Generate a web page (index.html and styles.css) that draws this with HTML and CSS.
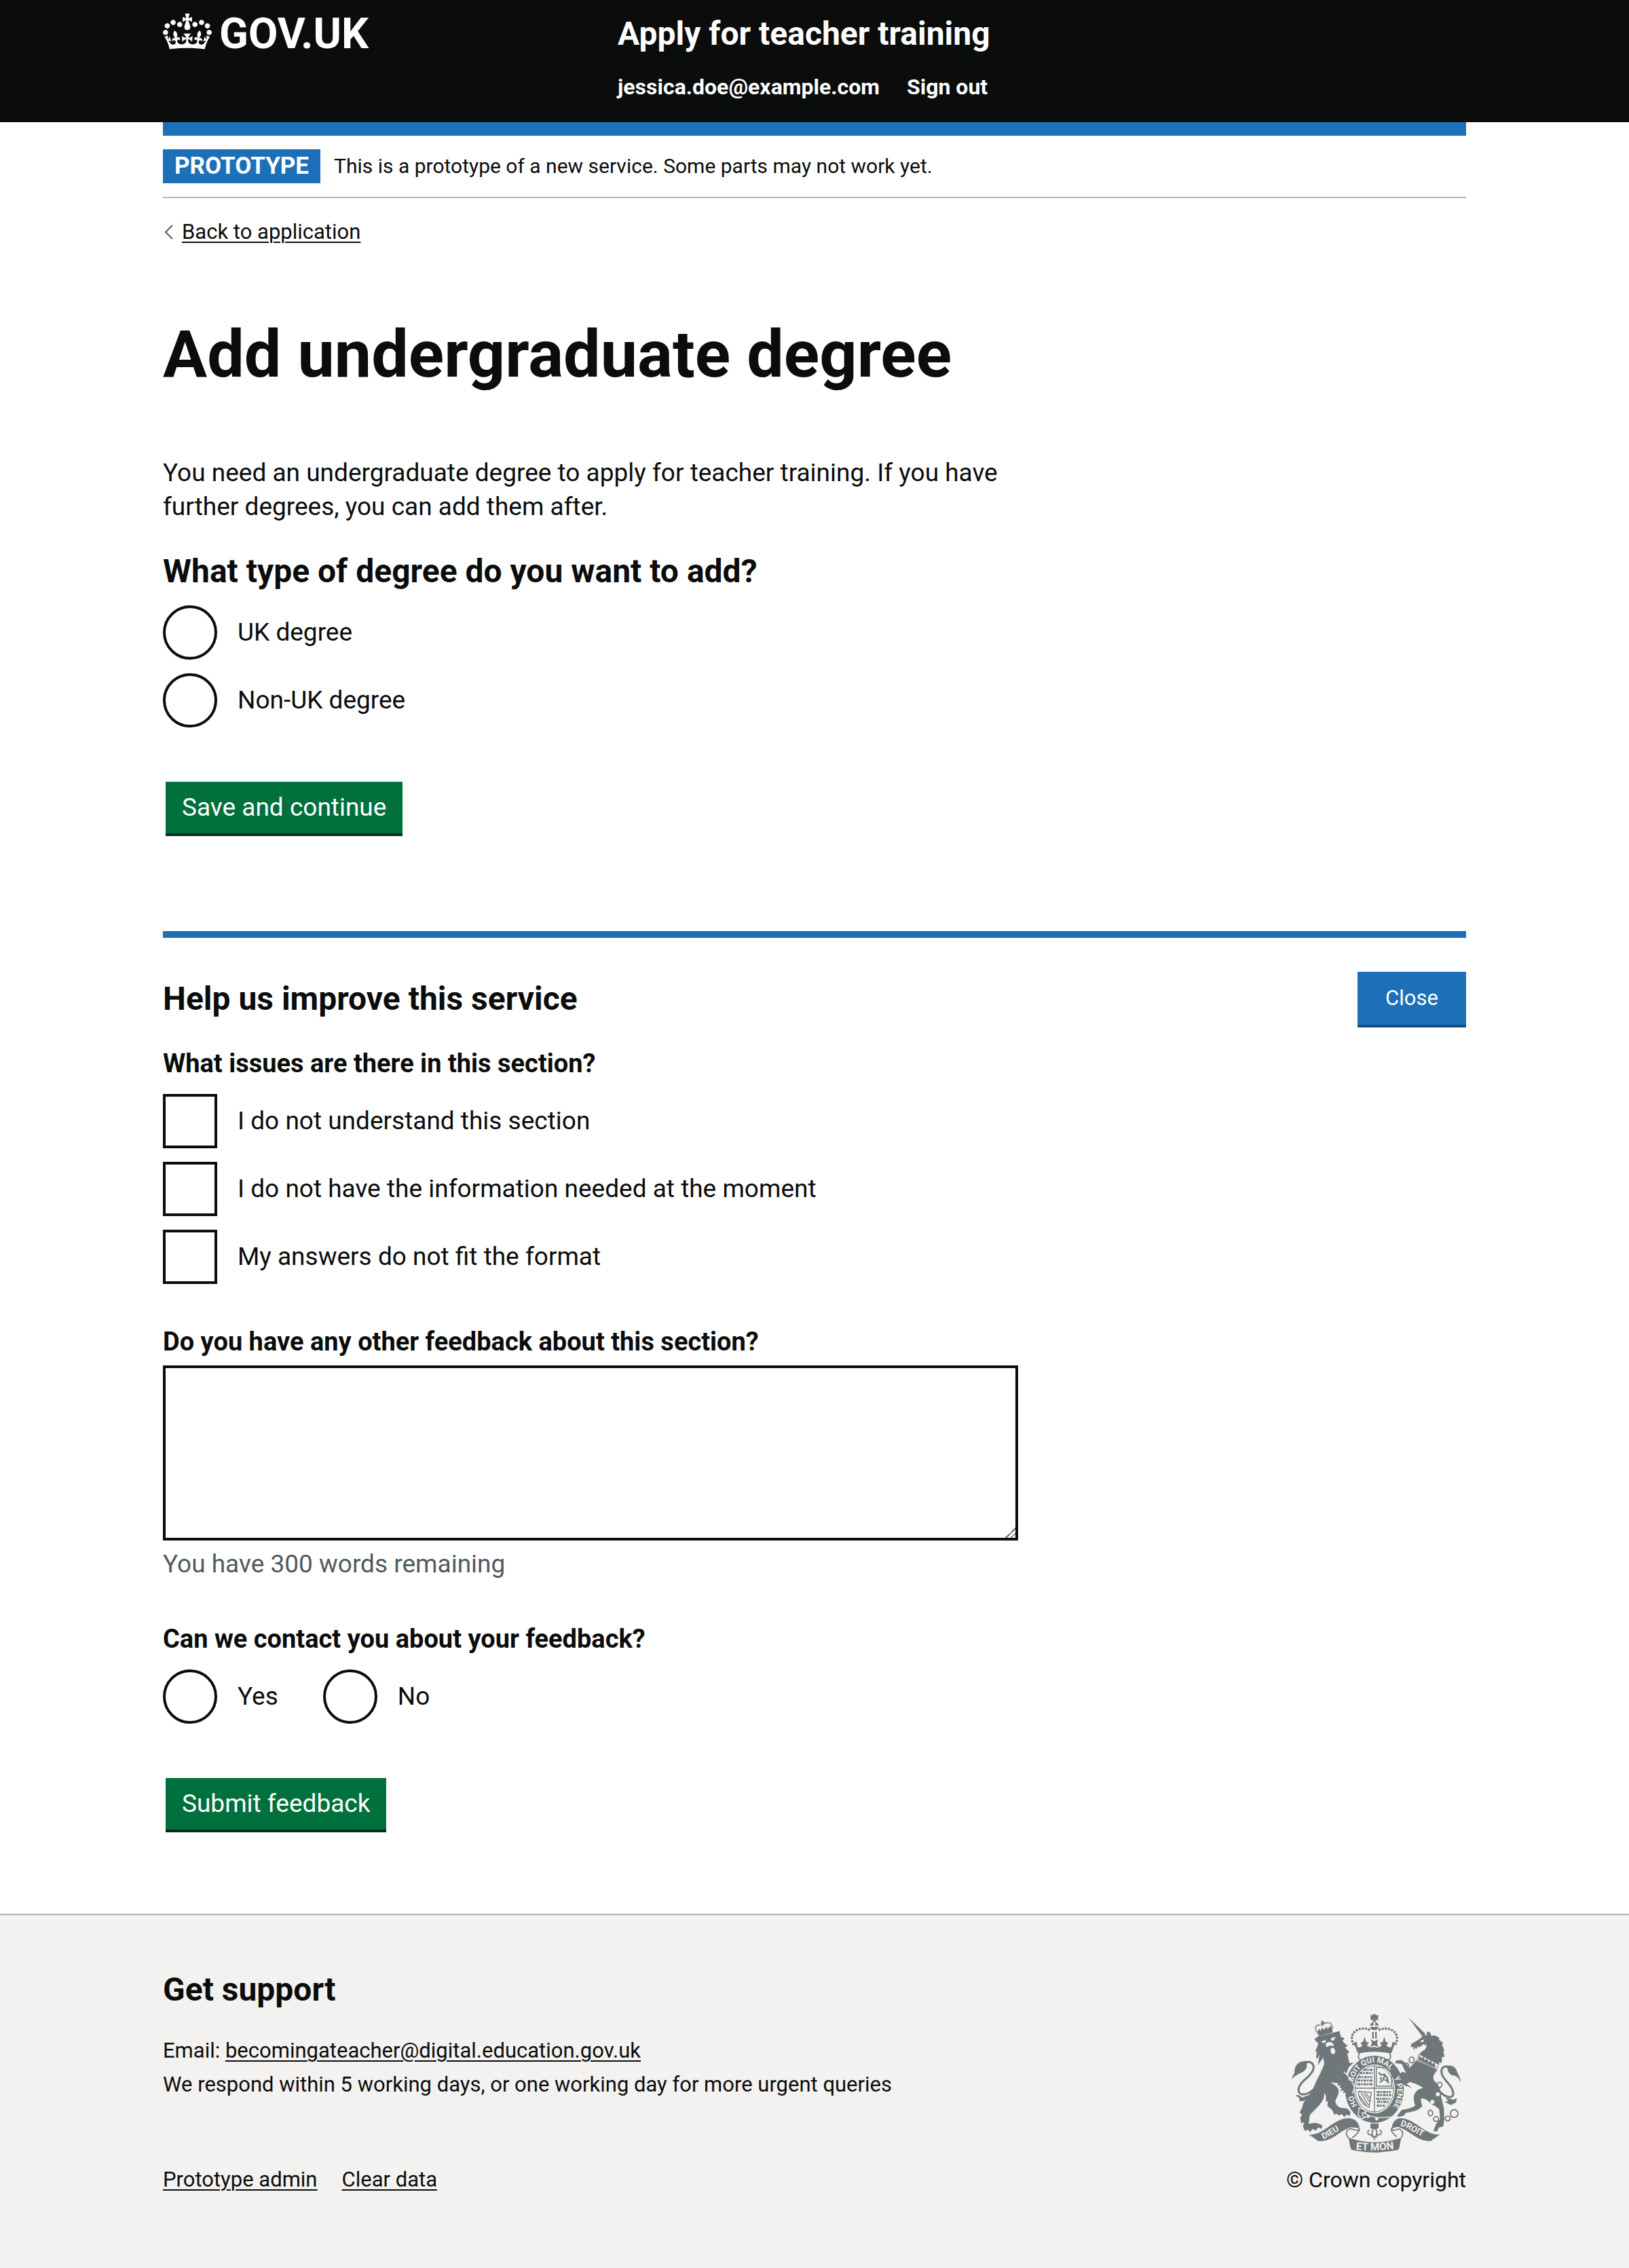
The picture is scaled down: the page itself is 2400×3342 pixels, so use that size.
FILE: index.html
```html
<!DOCTYPE html>
<html lang="en">
<head>
  <meta charset="utf-8">
  <meta name="viewport" content="width=device-width, initial-scale=1">
  <title>Add undergraduate degree – Apply for teacher training</title>
  <link rel="stylesheet" href="styles.css">
</head>
<body>
  <header class="header">
    <div class="container header-row">
      <a class="logo" href="#">
        <svg class="logo-crown" viewBox="0 0 132 97" aria-hidden="true">
          <path fill="currentColor" d="M25 30.2c3.5 1.5 7.7-.2 9.1-3.7 1.5-3.6-.2-7.8-3.9-9.2-3.6-1.4-7.6.3-9.1 3.9-1.4 3.5.3 7.5 3.9 9zM9 39.5c3.6 1.5 7.8-.2 9.2-3.7 1.5-3.6-.2-7.8-3.9-9.1-3.6-1.5-7.6.2-9.1 3.8-1.4 3.5.3 7.5 3.8 9zM4.4 57.2c3.5 1.5 7.7-.2 9.1-3.8 1.5-3.6-.2-7.7-3.9-9.1-3.5-1.5-7.6.3-9.1 3.8-1.4 3.5.3 7.6 3.9 9.1zm38.3-21.4c3.5 1.5 7.7-.2 9.1-3.8 1.5-3.6-.2-7.7-3.9-9.1-3.6-1.5-7.6.3-9.1 3.8-1.3 3.6.4 7.7 3.9 9.1zm64.4-5.6c-3.6 1.5-7.8-.2-9.1-3.7-1.5-3.6.2-7.8 3.8-9.2 3.6-1.4 7.7.3 9.2 3.9 1.3 3.5-.4 7.5-3.9 9zm15.9 9.3c-3.6 1.5-7.7-.2-9.1-3.7-1.5-3.6.2-7.8 3.7-9.1 3.6-1.5 7.7.2 9.2 3.8 1.5 3.5-.3 7.5-3.8 9zm4.7 17.7c-3.6 1.5-7.8-.2-9.2-3.8-1.5-3.6.2-7.7 3.9-9.1 3.6-1.5 7.7.3 9.2 3.8 1.3 3.5-.4 7.6-3.9 9.1zM89.3 35.8c-3.6 1.5-7.8-.2-9.2-3.8-1.4-3.6.2-7.7 3.9-9.1 3.6-1.5 7.7.3 9.2 3.8 1.4 3.6-.3 7.7-3.9 9.1zM69.7 17.7l8.9 4.7V9.3l-8.9 2.8c-.2-.3-.5-.6-.9-.9L72.4 0H59.6l3.5 11.2c-.3.3-.6.5-.9.9l-8.8-2.8v13.1l8.8-4.7c.3.3.6.7.9.9l-5 15.4v.1c-.2.8-.4 1.6-.4 2.4 0 4.1 3.1 7.5 7 8.1h.2c.3 0 .7.1 1 .1.4 0 .7 0 1-.1h.2c4-.6 7.1-4.1 7.1-8.1 0-.8-.1-1.7-.4-2.4V34l-5.1-15.4c.4-.2.7-.6 1-.9zM66 92.8c16.9 0 32.8 1.1 47.1 3.2 4-16.9 8.9-26.7 14-33.5l-9.6-3.4c1 4.9 1.1 7.2 0 10.2-1.5-1.4-3-4.3-4.2-8.7L108.6 76c2.8-2 5-3.2 7.5-3.3-4.4 9.4-10 11.9-13.6 11.2-4.3-.8-6.3-4.6-5.6-7.9 1-4.7 5.7-5.9 8-.5 4.3-8.7-3-11.4-7.6-8.8 7.1-7.2 7.9-13.5 2.1-21.1-8 6.1-8.1 12.3-4.5 20.8-4.7-5.4-12.1-2.5-9.5 6.2 3.4-5.2 7.9-2 7.2 3.1-.6 4.3-6.4 7.8-13.5 7.2-10.3-.9-10.9-8-11.2-13.8 2.5-.5 7.1 1.8 11 7.3L80.2 60c-4.1 4.4-8 5.3-12.3 5.4 1.4-4.4 8-11.6 8-11.6H55.5s6.4 7.2 7.9 11.6c-4.2-.1-8-1-12.3-5.4l1.4 16.4c3.9-5.5 8.5-7.7 10.9-7.3-.3 5.8-.9 12.8-11.1 13.8-7.2.6-12.9-2.9-13.5-7.2-.7-5 3.8-8.3 7.1-3.1 2.7-8.7-4.6-11.6-9.4-6.2 3.7-8.5 3.6-14.7-4.6-20.8-5.8 7.6-5 13.9 2.2 21.1-4.7-2.6-11.9.1-7.7 8.8 2.3-5.5 7.1-4.2 8.1.5.7 3.3-1.3 7.1-5.7 7.9-3.5.7-9-1.8-13.5-11.2 2.5.1 4.7 1.3 7.5 3.3l-4.7-15.4c-1.2 4.4-2.7 7.2-4.3 8.7-1.1-3-.9-5.3 0-10.2l-9.5 3.4c5 6.9 9.9 16.7 14 33.5 14.8-2.1 30.8-3.2 47.7-3.2z"/>
        </svg>
        <span>GOV.UK</span>
      </a>
      <div class="header-content">
        <a class="service-name" href="#">Apply for teacher training</a>
        <nav class="header-nav" aria-label="Account">
          <a href="#">jessica.doe@example.com</a>
          <a href="#">Sign out</a>
        </nav>
      </div>
    </div>
  </header>

  <div class="container">
    <div class="phase-banner">
      <strong class="tag">PROTOTYPE</strong>
      <span>This is a prototype of a new service. Some parts may not work yet.</span>
    </div>
    <a class="back-link" href="#">
      <svg class="back-icon" viewBox="0 0 16 24" aria-hidden="true"><path d="M14 2 4 12l10 10" fill="none" stroke="#505a5f" stroke-width="2"/></svg>
      <span>Back to application</span>
    </a>

    <main class="main">
      <h1 class="title">Add undergraduate degree</h1>
      <p class="body-text">You need an undergraduate degree to apply for teacher training. If you have further degrees, you can add them after.</p>
      <form>
        <fieldset class="fieldset">
          <legend class="heading">What type of degree do you want to add?</legend>
          <div class="choices">
            <label class="choice"><input class="radio" type="radio" name="degree"><span>UK degree</span></label>
            <label class="choice"><input class="radio" type="radio" name="degree"><span>Non-UK degree</span></label>
          </div>
        </fieldset>
        <button class="button" type="button">Save and continue</button>
      </form>
    </main>

    <section class="feedback" aria-labelledby="feedback-title">
      <div class="feedback-head">
        <h2 class="heading" id="feedback-title">Help us improve this service</h2>
        <button class="close-button" type="button">Close</button>
      </div>
      <form>
        <fieldset class="fieldset">
          <legend class="question">What issues are there in this section?</legend>
          <div class="choices">
            <label class="choice"><input class="checkbox" type="checkbox"><span>I do not understand this section</span></label>
            <label class="choice"><input class="checkbox" type="checkbox"><span>I do not have the information needed at the moment</span></label>
            <label class="choice"><input class="checkbox" type="checkbox"><span>My answers do not fit the format</span></label>
          </div>
        </fieldset>
        <div class="form-group">
          <label class="question" for="other">Do you have any other feedback about this section?</label>
          <textarea class="textarea" id="other" rows="5" aria-describedby="other-hint"></textarea>
          <p class="hint" id="other-hint">You have 300 words remaining</p>
        </div>
        <fieldset class="fieldset">
          <legend class="question">Can we contact you about your feedback?</legend>
          <div class="choices choices-inline">
            <label class="choice"><input class="radio" type="radio" name="contact"><span>Yes</span></label>
            <label class="choice"><input class="radio" type="radio" name="contact"><span>No</span></label>
          </div>
        </fieldset>
        <button class="button" type="button">Submit feedback</button>
      </form>
    </section>
  </div>

  <footer class="footer">
    <div class="container footer-row">
      <div class="footer-main">
        <div>
          <h2 class="heading">Get support</h2>
          <ul class="support">
            <li>Email: <a href="#">becomingateacher@digital.education.gov.uk</a></li>
            <li>We respond within 5 working days, or one working day for more urgent queries</li>
          </ul>
        </div>
        <div class="footer-links">
          <a href="#">Prototype admin</a>
          <a href="#">Clear data</a>
        </div>
      </div>
      <a class="copyright" href="#">
        <svg class="crest" viewBox="72 84 750 612" aria-hidden="true">
          <defs>
            <path id="garter-left" d="M363 486A97 114 0 0 1 341 404"/>
            <path id="garter-top" d="M344 384A97 114 0 0 1 524 358"/>
            <path id="garter-right" d="M524 364A97 114 0 0 1 490 524"/>
            <path id="ribbon-left" d="M212 637C248 622 276 596 322 580"/>
            <path id="ribbon-mid" d="M350 682Q438 692 530 679"/>
            <path id="ribbon-right" d="M551 577C595 588 625 622 690 640"/>
          </defs>
          <g fill="#6f777b">
            <!-- lion: crown, head and mane, body, tail -->
            <path d="M187 161 250 143 254 164 193 181Z"/>
            <path d="M199 125 204 119 202 113 210 112 209 118 217 117 218 126 210 125 213 134 205 136 205 127Z"/>
            <path d="M186 164 192 148 200 158 206 142 214 154 226 138 230 150 244 134 250 150Z"/>
            <path d="M172 196 188 182 262 164 284 158 289 184 305 190 297 203 320 226 307 230 328 251 318 258 327 300 346 298 325 318 313 348 332 372 348 405 350 434 338 428 334 441 322 432 311 442 312 428 299 434 302 420 286 424 294 411 282 408 290 399 274 400 278 389 258 387 240 385Q280 402 280 424C280 450 258 464 268 480 282 504 300 496 318 502L332 516 329 534 315 528 305 539 294 526 280 532 269 523 262 530 250 506 230 490 232 468 223 472 224 446 215 430C224 468 176 502 152 531L147 569C170 562 190 562 208 577L205 591 191 584 177 599 166 590 154 605 144 595 130 600 122 580 128 562 114 566 110 542 118 528 107 518 118 498C124 458 152 448 168 410C184 370 206 336 216 302L212 276 201 290 188 310 195 262 185 282 180 272 184 246 175 252 190 214Z"/>
            <path d="M72 373C74 354 88 348 84 334 90 300 112 288 142 293 136 306 144 316 132 330 118 348 90 346 72 373Z"/>
            <path d="M88 441 104 442 118 452 150 440 176 402 182 410 156 452 158 463 140 458 122 469 104 467 108 457Z"/>
            <!-- centre crown -->
            <path d="M421 87 432 90 430 84H445L442 90 454 87V111L442 107 446 118H429L433 107 421 111Z"/>
            <path d="M418 134A20 20 0 0 1 434 119V134ZM441 119A20 20 0 0 1 457 134H441ZM418 140H457A20 18 0 0 1 418 140Z"/>
            <path d="M428 162H435V192H428ZM441 162H448V192H441Z"/>
            <path d="M421 196 437 203 455 196 449 212 456 228 437 222 420 228 427 212Z"/>
            <path d="M346 210 360 206 362 228Q376 236 384 222L376 210 387 206 394 184 401 206 414 210 404 222Q420 236 437 228 456 236 470 222L462 210 475 206 481 184 488 206 499 210 491 222Q500 236 514 228L518 206 530 210 512 258Q438 242 365 258Z"/>
            <!-- unicorn: horn, head and mane, body, tail -->
            <path d="M588 98 664 172 650 183Z"/>
            <path d="M600 216 622 203 640 191 656 177 669 176 671 160 684 166 690 180 706 178 726 190 722 196 742 212 736 218 747 244 742 248 748 274 737 272 735 300 724 296 724 306 694 296 655 276 638 260 664 228 655 216 636 231 630 226 622 240 621 230 610 244 611 228 600 230Z"/>
            <path d="M624 287 716 330C700 350 692 362 704 380 722 394 734 420 732 446L745 500 746 550 742 580 722 586 716 602 698 601 712 566 728 548 724 504 704 488C684 484 674 456 646 456 638 466 652 484 648 492 626 516 590 516 574 522 572 534 556 538 536 536L558 508C582 502 608 500 618 487 602 446 616 418 652 410 638 398 612 388 594 384L580 392 604 410 570 398 546 352 562 338 578 344 558 304 528 300 536 288 558 287 580 304 592 322Z"/>
            <path d="M820 386C818 362 806 350 799 328 788 310 764 308 756 316 764 330 762 350 786 355 800 356 810 366 820 386Z"/>
            <path d="M752 452 764 468 748 471 776 486 798 474 803 455 786 462Z"/>
            <!-- scrolls -->
            <path d="M148 616C216 622 256 542 326 544 354 546 370 566 372 588 352 588 340 580 322 588 276 606 250 648 190 645Z"/>
            <path d="M728 616C660 622 616 542 550 544 530 546 516 566 514 588 530 588 536 578 552 586 600 604 630 648 686 645Z"/>
            <path d="M323 630Q438 670 557 630C548 660 552 674 542 684Q438 706 338 684C328 672 330 656 323 630Z"/>
            <path d="M420 567H456V588Q438 596 420 588Z"/>
          </g>
          <g fill="none" stroke="#6f777b">
            <path stroke-width="9" d="M132 296C162 290 176 308 165 334 152 364 104 384 102 418 102 446 138 446 172 414"/>
            <path stroke-width="9" d="M764 316C738 310 728 330 738 354 750 382 788 402 786 438 784 456 756 456 728 428"/>
            <path stroke-width="11" stroke-linecap="round" stroke-dasharray="0 14" d="M414 152C384 140 338 152 338 192Q340 212 350 226"/>
            <path stroke-width="11" stroke-linecap="round" stroke-dasharray="0 14" d="M461 152C492 140 538 152 538 192Q536 212 526 226"/>
            <path stroke-width="7" stroke-linecap="round" stroke-dasharray="0 9" d="M189 170C172 150 172 128 205 132 236 112 256 122 251 154"/>
            <path stroke-width="5" d="M372 258Q360 278 376 286H500Q516 276 505 258"/>
            <path stroke-width="5" d="M372 588C366 608 350 592 330 590 308 598 310 620 326 632M372 588Q372 608 340 630"/>
            <path stroke-width="5" d="M514 588C520 608 530 590 550 592 566 602 566 618 556 630M514 588Q506 600 536 626"/>
            <path stroke-width="5" d="M438 586C422 602 424 616 438 630 452 616 454 602 438 586M428 618C408 620 402 602 416 596M448 618C470 620 474 602 460 596M424 626H452M438 626V640"/>
            <path stroke-width="5" d="M602 273a11 13 0 1 0 1 0ZM580 300a9 11 0 1 0 1 0ZM592 355a11 13 0 1 0 1 0ZM685 508a10 13 0 1 0 1 0ZM710 536a11 11 0 1 0 1 0ZM761 534a11 11 0 1 0 1 0ZM790 506a17 17 0 1 0 1 0Z"/>
          </g>
          <!-- garter and shield -->
          <ellipse cx="438" cy="416" rx="130" ry="148" fill="#6f777b"/>
          <ellipse cx="438" cy="414" rx="91" ry="108" fill="#f3f2f1"/>
          <ellipse cx="438" cy="414" rx="85" ry="102" fill="none" stroke="#6f777b" stroke-width="3"/>
          <path d="M298 340 332 372 348 410 338 430 340 440 318 442 300 400Z" fill="#6f777b"/>
          <path d="M302 338 332 368 350 408 340 436" fill="none" stroke="#f3f2f1" stroke-width="4"/>
          <g fill="none" stroke="#6f777b">
            <path stroke-width="4" d="M353 411H523M438 310V518M446 402V320H490M446 402H514V350"/>
            <path stroke-width="9" stroke-dasharray="13 3 7 4" d="M390 330H430M372 344H430M366 362H428M362 377H430M362 394H430M448 428H510M448 442H512M446 458H506M450 472H500M448 488H484"/>
            <path stroke-width="7" d="M456 342 466 352 482 350 494 364 500 390M462 386 478 372 484 350M470 362 462 372M484 374 496 380"/>
            <path stroke-width="4" d="M366 426 424 430 414 496Q372 480 366 426M378 432 412 486M390 434 416 470M400 434 418 456M372 446 402 486"/>
          </g>
          <path d="M392 522C420 538 450 546 510 538" fill="none" stroke="#f3f2f1" stroke-width="4"/>
          <path d="M370 498 392 504 400 520 384 520 386 534 400 540 382 546 366 530Z" fill="#6f777b" stroke="#f3f2f1" stroke-width="4"/>
          <g fill="#f3f2f1">
            <circle cx="410" cy="536" r="7"/><circle cx="448" cy="547" r="7"/>
            <circle cx="718" cy="438" r="9"/><circle cx="694" cy="472" r="9"/>
            <path d="M203 204 222 198 224 206 212 212ZM246 190 266 184 258 200 246 200Z"/>
            <path d="M222 214 236 206 252 210 260 226 242 222 226 230ZM246 234Q256 228 264 242 268 260 252 260 240 254 246 234Z"/>
            <path d="M640 202 658 196 654 206 644 208ZM628 236Q664 236 662 214 680 236 640 252Z"/>
            <path d="M726 384a10 12 0 1 0 1 0Z" stroke="#6f777b" stroke-width="5"/>
            <path d="M634 260 722 306 712 328 628 284Z" stroke="#6f777b" stroke-width="3"/>
          </g>
          <path d="M632 284 638 266 646 278 656 272 660 288 672 280 676 296 688 288 692 304 704 298 708 322Z" fill="#6f777b"/>
          <g class="crest-text">
            <text><textPath href="#garter-left">HO</textPath></text>
            <text><textPath href="#garter-top">SOIT QUI MAL</textPath></text>
            <text><textPath href="#garter-right">Y PENSE</textPath></text>
            <text class="crest-text-medium"><textPath href="#ribbon-left">DIEU</textPath></text>
            <text class="crest-text-large"><textPath href="#ribbon-mid" startOffset="50%">ET MON</textPath></text>
            <text class="crest-text-medium"><textPath href="#ribbon-right">DROIT</textPath></text>
          </g>
        </svg>
        <span>© Crown copyright</span>
      </a>
    </div>
  </footer>
</body>
</html>
```
FILE: styles.css
```css
* { box-sizing: border-box; }

body {
  margin: 0;
  background: #fff;
  color: #0b0c0c;
  font-family: Roboto, "Liberation Sans", Arial, sans-serif;
  font-size: 37px;
  line-height: 50px;
}

h1, h2, p, ul { margin: 0; padding: 0; }
a { color: inherit; }

.container {
  width: 80%;
  max-width: 1920px;
  margin: 0 auto;
}

/* Header */
.header {
  background: linear-gradient(#0b0c0c 180px, #fff 180px);
  color: #fff;
}
.header a { text-decoration: none; }
.header-row {
  display: grid;
  grid-template-columns: 1fr 2fr;
  height: 200px;
  padding-top: 20px;
  border-bottom: 20px solid #1d70b8;
}
.logo {
  display: flex;
  align-items: flex-start;
  gap: 11px;
  font-size: 63px;
  font-weight: 700;
  line-height: 60px;
}
.logo-crown {
  width: 72px;
  height: 53px;
}
.header-content {
  display: flex;
  flex-direction: column;
  gap: 28px;
  padding-left: 30px;
  font-weight: 700;
}
.service-name {
  font-size: 48px;
  line-height: 60px;
}
.header-nav {
  display: flex;
  gap: 40px;
  font-size: 32px;
  line-height: 40px;
}

/* Banner and back link */
.phase-banner {
  display: flex;
  align-items: center;
  gap: 20px;
  padding: 20px 0;
  border-bottom: 2px solid #b1b4b6;
  font-size: 30px;
}
.tag {
  padding: 0 17px;
  background: #1d70b8;
  color: #fff;
  font-size: 35px;
}
.back-link {
  display: flex;
  align-items: center;
  gap: 12px;
  width: fit-content;
  margin-top: 30px;
  font-size: 31px;
  line-height: 40px;
  text-decoration: none;
}
.back-link span {
  text-decoration: underline;
  text-decoration-thickness: 2px;
  text-underline-offset: 4px;
}
.back-icon {
  width: 16px;
  height: 24px;
}

/* Main form */
.main { padding: 110px 0 144px; }
.title {
  margin-bottom: 100px;
  font-size: 97px;
  line-height: 100px;
}
.body-text {
  max-width: 1260px;
  margin-bottom: 40px;
}
.heading {
  font-size: 48px;
  font-weight: 700;
  line-height: 60px;
}
.fieldset {
  min-width: 0;
  margin: 0;
  padding: 0;
  border: 0;
}
.fieldset legend { padding: 0; }
.question {
  display: block;
  font-size: 38px;
  font-weight: 700;
}
.choices {
  display: flex;
  flex-direction: column;
  align-items: flex-start;
  gap: 20px;
  margin-top: 20px;
}
.choices-inline {
  flex-direction: row;
  gap: 66px;
}
.choice {
  display: flex;
  align-items: center;
  gap: 30px;
}
.radio,
.checkbox {
  flex: none;
  width: 80px;
  height: 80px;
  margin: 0;
  border: 4px solid #0b0c0c;
  background: #fff;
  appearance: none;
}
.radio { border-radius: 50%; }
.radio:checked,
.checkbox:checked { box-shadow: inset 0 0 0 16px #fff, inset 0 0 0 40px #0b0c0c; }

.button {
  display: block;
  margin: 80px 4px 0;
  padding: 13px 24px;
  border: 0;
  background: #00703c;
  box-shadow: 0 4px 0 #002d18;
  color: #fff;
  font: inherit;
}

/* Feedback */
.feedback {
  padding: 50px 0 124px;
  border-top: 10px solid #1d70b8;
}
.feedback-head {
  display: flex;
  align-items: flex-start;
  justify-content: space-between;
  padding-bottom: 32px;
}
.feedback-head .heading { padding-top: 10px; }
.close-button {
  width: 160px;
  height: 78px;
  padding: 0;
  border: 0;
  background: #1d70b8;
  box-shadow: 0 4px 0 #144e81;
  color: #fff;
  font: inherit;
  font-size: 31px;
}
.form-group { margin: 60px 0; }
.textarea {
  display: block;
  width: 100%;
  max-width: 1260px;
  height: 258px;
  margin: 10px 0;
  padding: 10px;
  border: 4px solid #0b0c0c;
  border-radius: 0;
  font: inherit;
}
.textarea::-webkit-resizer {
  background: linear-gradient(135deg, #fff 50%, #6b6b6b 50%, #6b6b6b 57%, #fff 57%, #fff 75%, #6b6b6b 75%, #6b6b6b 82%, #fff 82%);
}
.hint { color: #505a5f; }

/* Footer */
.footer {
  padding: 80px 0 110px;
  border-top: 2px solid #b1b4b6;
  background: #f3f2f1;
  font-size: 31px;
  line-height: 40px;
}
.footer-row {
  display: flex;
  justify-content: space-between;
}
.footer-main {
  display: flex;
  flex-direction: column;
  justify-content: space-between;
}
.support {
  display: grid;
  gap: 10px;
  margin-top: 40px;
  list-style: none;
}
.footer-main a {
  text-decoration-thickness: 2px;
  text-underline-offset: 4px;
}
.footer-links {
  display: flex;
  gap: 36px;
}
.copyright {
  display: flex;
  flex-direction: column;
  align-items: center;
  gap: 20px;
  padding-top: 66px;
  font-size: 32px;
  text-decoration: none;
}
.crest {
  width: 250px;
  height: 204px;
}
.crest-text {
  fill: #f3f2f1;
  font-size: 34px;
  font-weight: 700;
}
.crest-text-medium { font-size: 38px; }
.crest-text-large {
  font-size: 46px;
  text-anchor: middle;
}
```
